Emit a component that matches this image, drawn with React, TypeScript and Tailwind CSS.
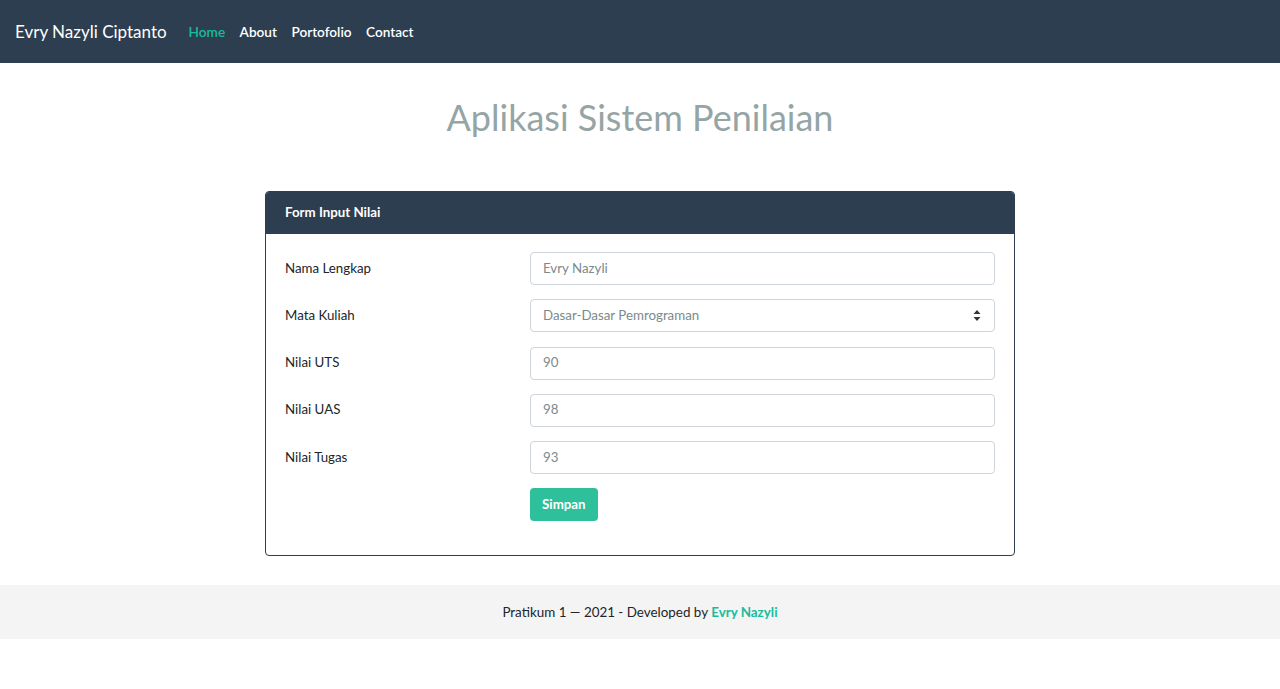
const fields = [
  { label: 'Nama Lengkap', value: 'Evry Nazyli' },
  { label: 'Nilai UTS', value: '90' },
  { label: 'Nilai UAS', value: '98' },
  { label: 'Nilai Tugas', value: '93' },
];

function Row({ label, children }: { label: string; children: React.ReactNode }) {
  return (
    <div className="flex items-center">
      <label className="w-[245px] text-[13.3px] text-[#212529]">{label}</label>
      <div className="flex-1">{children}</div>
    </div>
  );
}

function Input({ value }: { value: string }) {
  return (
    <div className="h-[33px] flex items-center px-3 border border-[#ced4da] rounded-[4px] text-[13.3px] text-[#7b8a8b]">
      {value}
    </div>
  );
}

export default function App() {
  return (
    <div className="min-h-screen bg-white" style={{ fontFamily: 'Lato, "Noto Sans", sans-serif' }}>
      {/* Navbar */}
      <nav className="h-[63px] bg-[#2c3e50] flex items-center px-[15px] pt-[1px]">
        <span className="text-white text-[17px] mr-[22px]">Evry Nazyli Ciptanto</span>
        <div className="flex gap-[14.5px] text-[13.6px] font-semibold">
          <a className="text-[#18bc9c]">Home</a>
          <a className="text-white">About</a>
          <a className="text-white">Portofolio</a>
          <a className="text-white">Contact</a>
        </div>
      </nav>

      <h1 className="text-center text-[#95a5a6] text-[36px] mt-[33px] mb-[52px] leading-[1.2]">
        Aplikasi Sistem Penilaian
      </h1>

      {/* Card */}
      <div className="w-[750px] mx-auto border border-[#2c3e50] rounded-[4px] overflow-hidden">
        <div className="bg-[#2c3e50] h-[42px] flex items-center px-[19px] text-white text-[13.3px] font-bold">
          Form Input Nilai
        </div>
        <div className="px-[19px] pt-[18px] pb-[34px] flex flex-col gap-[14.25px]">
          <Row label={fields[0].label}>
            <Input value={fields[0].value} />
          </Row>
          <Row label="Mata Kuliah">
            <div className="h-[33px] flex items-center justify-between px-3 border border-[#ced4da] rounded-[4px] text-[13.3px] text-[#7b8a8b]">
              <span>Dasar-Dasar Pemrograman</span>
              <svg width="8" height="11" viewBox="0 0 8 11" className="mr-[1px]">
                <path d="M4 0 L7.5 4 H0.5 Z" fill="#333" />
                <path d="M4 11 L7.5 7 H0.5 Z" fill="#333" />
              </svg>
            </div>
          </Row>
          {fields.slice(1).map((f) => (
            <Row key={f.label} label={f.label}>
              <Input value={f.value} />
            </Row>
          ))}
          <div className="pl-[245px]">
            <button className="h-[33px] px-[12px] bg-[#2ebf9b] text-white text-[13.3px] font-bold rounded-[4px]">
              Simpan
            </button>
          </div>
        </div>
      </div>

      {/* Footer */}
      <footer className="mt-[29px] h-[54px] bg-[#f4f4f4] flex items-center justify-center text-[13.4px] text-[#212529]">
        Pratikum 1 — 2021 - Developed by&nbsp;<span className="text-[#18bc9c] font-bold">Evry Nazyli</span>
      </footer>
    </div>
  );
}
